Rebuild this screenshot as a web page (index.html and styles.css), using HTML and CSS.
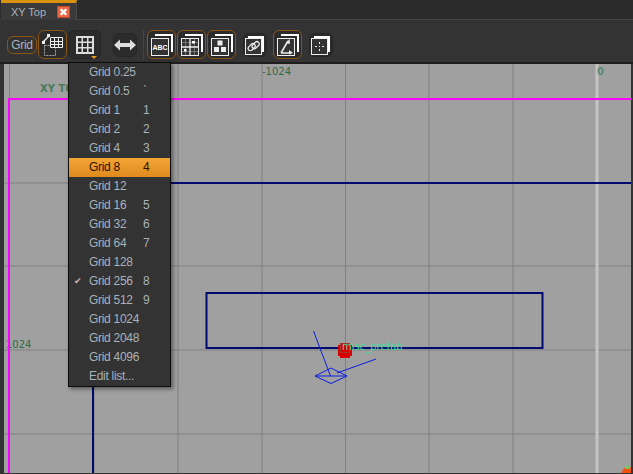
FILE: index.html
```html
<!DOCTYPE html>
<html lang="en">
<head>
	<meta charset="UTF-8">
	<title>XY Top</title>
	<link rel="stylesheet" href="styles.css">
</head>
<body>
	<div id="tabbar">
		<div class="tab">
			<span class="tab-title">XY Top</span>
			<span class="tab-close">
				<svg width="12" height="12" viewBox="0 0 12 12"><path d="M3 3l6 6M9 3l-6 6" stroke="#fff" stroke-width="2.4" fill="none"/></svg>
			</span>
		</div>
	</div>
	<div id="toolbar">
		<span class="grid-label">Grid</span>
		<span class="btn on">
			<svg width="24" height="24" viewBox="0 0 24 24" fill="none" stroke="#eee">
				<path d="M2 9L8 3" stroke-width="1.5"/><rect x="1" y="8" width="3" height="3" fill="#eee" stroke="none"/><rect x="6" y="1" width="3" height="3" fill="#eee" stroke="none"/>
				<path d="M9.500 4.500h12v10h-12zM13.500 4.500v10M17.500 4.500v10M9.500 8.500h12M9.500 11.500h12" stroke-width="1"/>
				<path d="M3.500 12.500h6M3.500 12.500v10h11v-7" stroke="#aaa" stroke-dasharray="2 1"/>
			</svg>
		</span>
		<span class="btn big">
			<svg width="20" height="20" viewBox="0 0 20 20" fill="#ddd"><path d="M1 1h18v18H1zM3 3v3.500h3.500V3zM8 3v3.500h4V3zM13.500 3v3.500H17V3zM3 8v4h3.500V8zM8 8v4h4V8zM13.500 8v4H17V8zM3 13.500V17h3.500v-3.500zM8 13.500V17h4v-3.500zM13.500 13.500V17H17v-3.500z" fill-rule="evenodd"/></svg>
			<i class="caret"></i>
		</span>
		<span class="btn small wide">
			<svg width="22" height="12" viewBox="0 0 22 12" fill="#ddd"><path d="M0 6l6-5.500V4h10V.5L22 6l-6 5.500V8H6v3.500z"/></svg>
		</span>
		<span class="divider"></span>
		<span class="btn on">
			<svg width="24" height="24" viewBox="0 0 24 24"><path d="M5 1h18v18h-2V3H5z" fill="#fff"/><rect x="1.500" y="5.500" width="17" height="17" fill="#333" stroke="#eee"/><text x="10" y="16.500" class="abc">ABC</text></svg>
		</span>
		<span class="btn on">
			<svg width="24" height="24" viewBox="0 0 24 24" fill="none" stroke="#eee"><path d="M5 1h18v18h-2V3H5z" fill="#fff" stroke="none"/><rect x="1.500" y="5.500" width="17" height="17" fill="#333"/><path d="M5.500 6v16M14.500 6v16M2 9.500h16M2 18.500h16" stroke-width=".6" stroke="#999"/><path d="M10 5.500v17M1.500 14h17" stroke-width="1.300"/><path d="M12 8h3v2.500h-3zM4 16h2.500v2.500H4z" fill="#fff" stroke="none"/></svg>
		</span>
		<span class="btn on">
			<svg width="24" height="24" viewBox="0 0 24 24"><path d="M5 1h18v18h-2V3H5z" fill="#fff"/><rect x="1.500" y="5.500" width="17" height="17" fill="#333" stroke="#eee"/><path d="M7.500 7.500h5v5h-5zM4 14h5v5H4zM11 14h5v5h-5z" fill="#eee"/></svg>
		</span>
		<span class="btn small">
			<svg width="20" height="20" viewBox="0 0 20 20" fill="none" stroke="#eee"><path d="M3 1h16v16h-2V3H3z" fill="#fff" stroke="none"/><rect x=".500" y="3.500" width="16" height="16" fill="#333"/><rect x="2.500" y="10" width="8" height="4.500" rx="2.200" stroke-width="1.300" transform="rotate(-45 6.500 12)"/><rect x="6.500" y="8" width="8" height="4.500" rx="2.200" stroke-width="1.300" transform="rotate(-45 10.500 10)"/></svg>
		</span>
		<span class="btn on">
			<svg width="24" height="24" viewBox="0 0 24 24" fill="none" stroke="#eee"><path d="M5 1h18v18h-2V3H5z" fill="#fff" stroke="none"/><rect x="1.500" y="5.500" width="17" height="17" fill="#333"/><path d="M5 20L12 8" stroke-width="1.500"/><path d="M10 10l3.500-4 .5 5z" fill="#eee" stroke="none"/><path d="M5 20h10" stroke-width="1.500"/><path d="M13 17l4 3-4 1.500z" fill="#eee" stroke="none"/></svg>
		</span>
		<span class="btn small">
			<svg width="20" height="20" viewBox="0 0 20 20" fill="none" stroke="#eee"><path d="M3 1h16v16h-2V3H3z" fill="#fff" stroke="none"/><rect x=".500" y="3.500" width="16" height="16" fill="#333"/><path d="M8.500 7v2M8.500 14v2M4 11.500h2M11 11.500h2"/><rect x="8" y="11" width="1" height="1" fill="#eee" stroke="none"/></svg>
		</span>
	</div>
	<div id="view">
		<svg class="canvas" width="627" height="409" viewBox="4 64 627 409">
			<g class="grid">
				<path d="M9.500 64V473M94 64V473M178 64V473M262 64V473M345.500 64V473M429 64V473M513 64V473"/>
				<path d="M4 183H631M4 266H631M4 350H631M4 434H631"/>
			</g>
			<path class="axis" d="M597 64V473"/>
			<text x="40" y="92" class="lbl bold">XY TOP</text>
			<text x="262" y="75" class="lbl">-1024</text>
			<text x="597" y="75" class="lbl pale">0</text>
			<text x="6" y="348" class="lbl">1024</text>
			<path class="pink" d="M631 99H9V473"/>
			<g class="navy">
				<path d="M93 183H631M93 183V473"/>
				<rect x="206.500" y="293" width="336" height="55"/>
			</g>
			<path class="red" d="M340 343h10v2h2v11h-2v2h-10v-2h-2v-11h2z"/>
			<path class="redmark" d="M340.500 343.500h9v9h-9z"/>
			<text x="342" y="350" class="prefab">misc_prefab</text>
			<g class="cam">
				<path d="M313.500 331L330.500 376M337 373L376 359"/>
				<path d="M315 376L331 368L347 376L331 383.500ZM315 376H347"/>
			</g>
			<path class="corner" d="M621 473l4-6h6v6z"/>
			<path class="corner2" d="M625 466h5v3h-5z"/>
		</svg>
	</div>
	<ul id="menu">
		<li>Grid 0.25</li>
		<li>Grid 0.5<b>`</b></li>
		<li>Grid 1<b>1</b></li>
		<li>Grid 2<b>2</b></li>
		<li>Grid 4<b>3</b></li>
		<li class="selected">Grid 8<b>4</b></li>
		<li>Grid 12</li>
		<li>Grid 16<b>5</b></li>
		<li>Grid 32<b>6</b></li>
		<li>Grid 64<b>7</b></li>
		<li>Grid 128</li>
		<li class="checked">Grid 256<b>8</b></li>
		<li>Grid 512<b>9</b></li>
		<li>Grid 1024</li>
		<li>Grid 2048</li>
		<li>Grid 4096</li>
		<li>Edit list...</li>
	</ul>
</body>
</html>
```

FILE: styles.css
```css
*{
	margin: 0;
	padding: 0;
	box-sizing: border-box;
}
ul{
	list-style: none;
}
html, body{
	height: 100%;
	overflow: hidden;
}
body{
	background: #333;
	font-family: "Liberation Sans", sans-serif;
	display: flex;
	flex-direction: column;
	position: relative;
}
#tabbar{
	height: 20px;
	background: #2b2b2b;
	border-bottom: 1px solid #444;
	flex: none;
}
.tab{
	width: 76px;
	height: 20px;
	margin-left: 1px;
	background: #3a3a3a;
	border-top: 3px solid #d8920f;
	border-right: 1px solid #4a4a4a;
	display: flex;
	align-items: center;
	padding-left: 10px;
	gap: 11px;
}
.tab-title{
	font-size: 11px;
	color: #a9b3bb;
}
.tab-close{
	width: 13px;
	height: 12px;
	background: #e8694a;
	border: 1px solid #c8452a;
	display: flex;
	align-items: center;
	justify-content: center;
}
#toolbar{
	height: 44px;
	background: #333;
	border-bottom: 2px solid #1e1e1e;
	flex: none;
	display: flex;
	align-items: center;
	padding: 7px 0 0 7px;
}
.grid-label{
	width: 30px;
	height: 18px;
	line-height: 16px;
	border: 1px solid #8a5412;
	border-radius: 6px;
	font-size: 12px;
	letter-spacing: -.3px;
	color: #a9b3bb;
	text-align: center;
	margin-right: 1px;
}
.btn{
	width: 29px;
	height: 29px;
	background: #2b2b2b;
	border: 1px solid #8a5412;
	border-radius: 6px;
	display: flex;
	align-items: center;
	justify-content: center;
	margin-right: 1px;
	position: relative;
}
.big{
	width: 33px;
	height: 29px;
	border-color: #262626;
}
.small{
	width: 24px;
	height: 24px;
	border-color: #262626;
	margin: 0 6px;
}
.wide{
	margin: 0 0 0 11px;
}
.caret{
	position: absolute;
	right: 3px;
	bottom: -1px;
	border: 3px solid transparent;
	border-top: 3px solid #e89a20;
	border-bottom: 0;
}
.divider{
	width: 1px;
	height: 30px;
	background: #444;
	margin: 0 3px 0 6px;
}
.abc{
	font: bold 7px "Liberation Sans", sans-serif;
	fill: #fff;
	text-anchor: middle;
}
#view{
	flex: 1;
	margin: 0 2px 1px 4px;
	background: #a0a0a0;
	overflow: hidden;
}
.canvas{
	display: block;
}
.grid path{
	stroke: #808080;
	stroke-width: 1;
	fill: none;
}
.axis{
	stroke: #c4c4c4;
	stroke-width: 3;
	fill: none;
}
.pink{
	stroke: #ff00ff;
	stroke-width: 2;
	fill: none;
}
.navy path, .navy rect{
	stroke: #000a70;
	stroke-width: 2;
	fill: none;
}
.lbl{
	font: 10px "DejaVu Sans", sans-serif;
	fill: #2f6a48;
}
.bold{
	font-weight: bold;
	fill: #4a7a5c;
}
.pale{
	fill: #5b8a70;
	font-weight: bold;
}
.prefab{
	font: 10px "DejaVu Sans", sans-serif;
	fill: #40dc98;
}
.red{
	fill: #d80000;
}
.redmark{
	fill: none;
	stroke: #a03828;
}
.cam path{
	stroke: #0a1ee0;
	stroke-width: 1;
	fill: none;
}
.corner{
	fill: #f05010;
}
.corner2{
	fill: #70c860;
}
#menu{
	position: absolute;
	left: 68px;
	top: 62px;
	width: 103px;
	background: #333;
	border: 1px solid #0c0c0c;
	box-shadow: 2px 2px 4px rgba(0, 0, 0, .45);
	font-size: 12px;
	letter-spacing: -.3px;
	color: #a8b2ba;
}
#menu li{
	height: 19px;
	line-height: 19px;
	padding-left: 20px;
	position: relative;
}
#menu b{
	position: absolute;
	left: 74px;
	top: 0;
	font-weight: normal;
}
#menu .selected{
	background: linear-gradient(#f2a535, #e08a1e);
	color: #2a1400;
}
#menu .checked:before{
	content: "\2714";
	position: absolute;
	left: 5px;
	top: 0;
	font-size: 9px;
	color: #bbb;
}
```
